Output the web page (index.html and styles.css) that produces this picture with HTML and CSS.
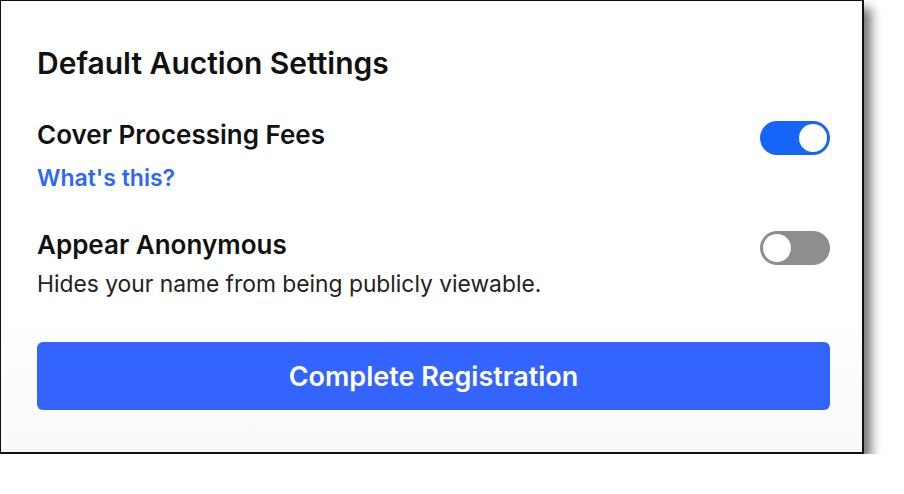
FILE: index.html
```html
<!DOCTYPE html>
<html lang="en">
<head>
    <meta charset="UTF-8">
    <meta name="viewport" content="width=device-width, initial-scale=1.0">
    <title>Default Auction Settings</title>
    <link rel="stylesheet" href="styles.css">
</head>
<body>
<div class="card">
    <h2 class="title">Default Auction Settings</h2>

    <div class="setting">
        <div class="setting-text">
            <div class="label">Cover Processing Fees</div>
            <a class="help" href="#">What's this?</a>
        </div>
        <span class="toggle on"><span class="knob"></span></span>
    </div>

    <div class="setting">
        <div class="setting-text">
            <div class="label">Appear Anonymous</div>
            <div class="desc">Hides your name from being publicly viewable.</div>
        </div>
        <span class="toggle"><span class="knob"></span></span>
    </div>

    <button class="submit">Complete Registration</button>
</div>
</body>
</html>
```

FILE: styles.css
```css
body {
    font-family: 'Inter', 'Noto Sans', sans-serif;
    margin: 0;
    padding: 0;
    background-color: #fff;
    color: #111;
}
.card {
    width: 864px;
    height: 454px;
    box-sizing: border-box;
    border: 2px solid #111;
    border-left-width: 1px;
    border-top-width: 1px;
    background: linear-gradient(#fff 70%, #f9f9f9);
    box-shadow: 7px 8px 10px rgba(0, 0, 0, 0.55);
    padding: 43px 32px 0 36px;
}
.title {
    margin: 0 0 36px 0;
    font-size: 30px;
    font-weight: 600;
    line-height: 38px;
}
.setting {
    display: flex;
    justify-content: space-between;
    align-items: flex-start;
}
.setting + .setting {
    margin-top: 35px;
}
.label {
    font-size: 26px;
    font-weight: 600;
    line-height: 34px;
}
.help {
    display: block;
    margin-top: 11px;
    color: #2d68fb;
    font-size: 23px;
    font-weight: 600;
    text-decoration: none;
    line-height: 30px;
}
.desc {
    margin-top: 7px;
    font-size: 22.8px;
    line-height: 30px;
    color: #222;
}
.toggle {
    position: relative;
    display: block;
    width: 70px;
    height: 34px;
    margin-top: 3px;
    border-radius: 17px;
    background-color: #8e8e8e;
}
.toggle.on {
    background-color: #1565f8;
}
.knob {
    position: absolute;
    top: 3px;
    left: 3px;
    width: 28px;
    height: 28px;
    border-radius: 50%;
    background-color: #fff;
}
.toggle.on .knob {
    left: 39px;
}
.submit {
    display: block;
    width: 100%;
    height: 68px;
    margin-top: 43px;
    border: none;
    border-radius: 6px;
    background-color: #3464ff;
    color: #fff;
    font-family: inherit;
    font-size: 27px;
    font-weight: 600;
}
```
